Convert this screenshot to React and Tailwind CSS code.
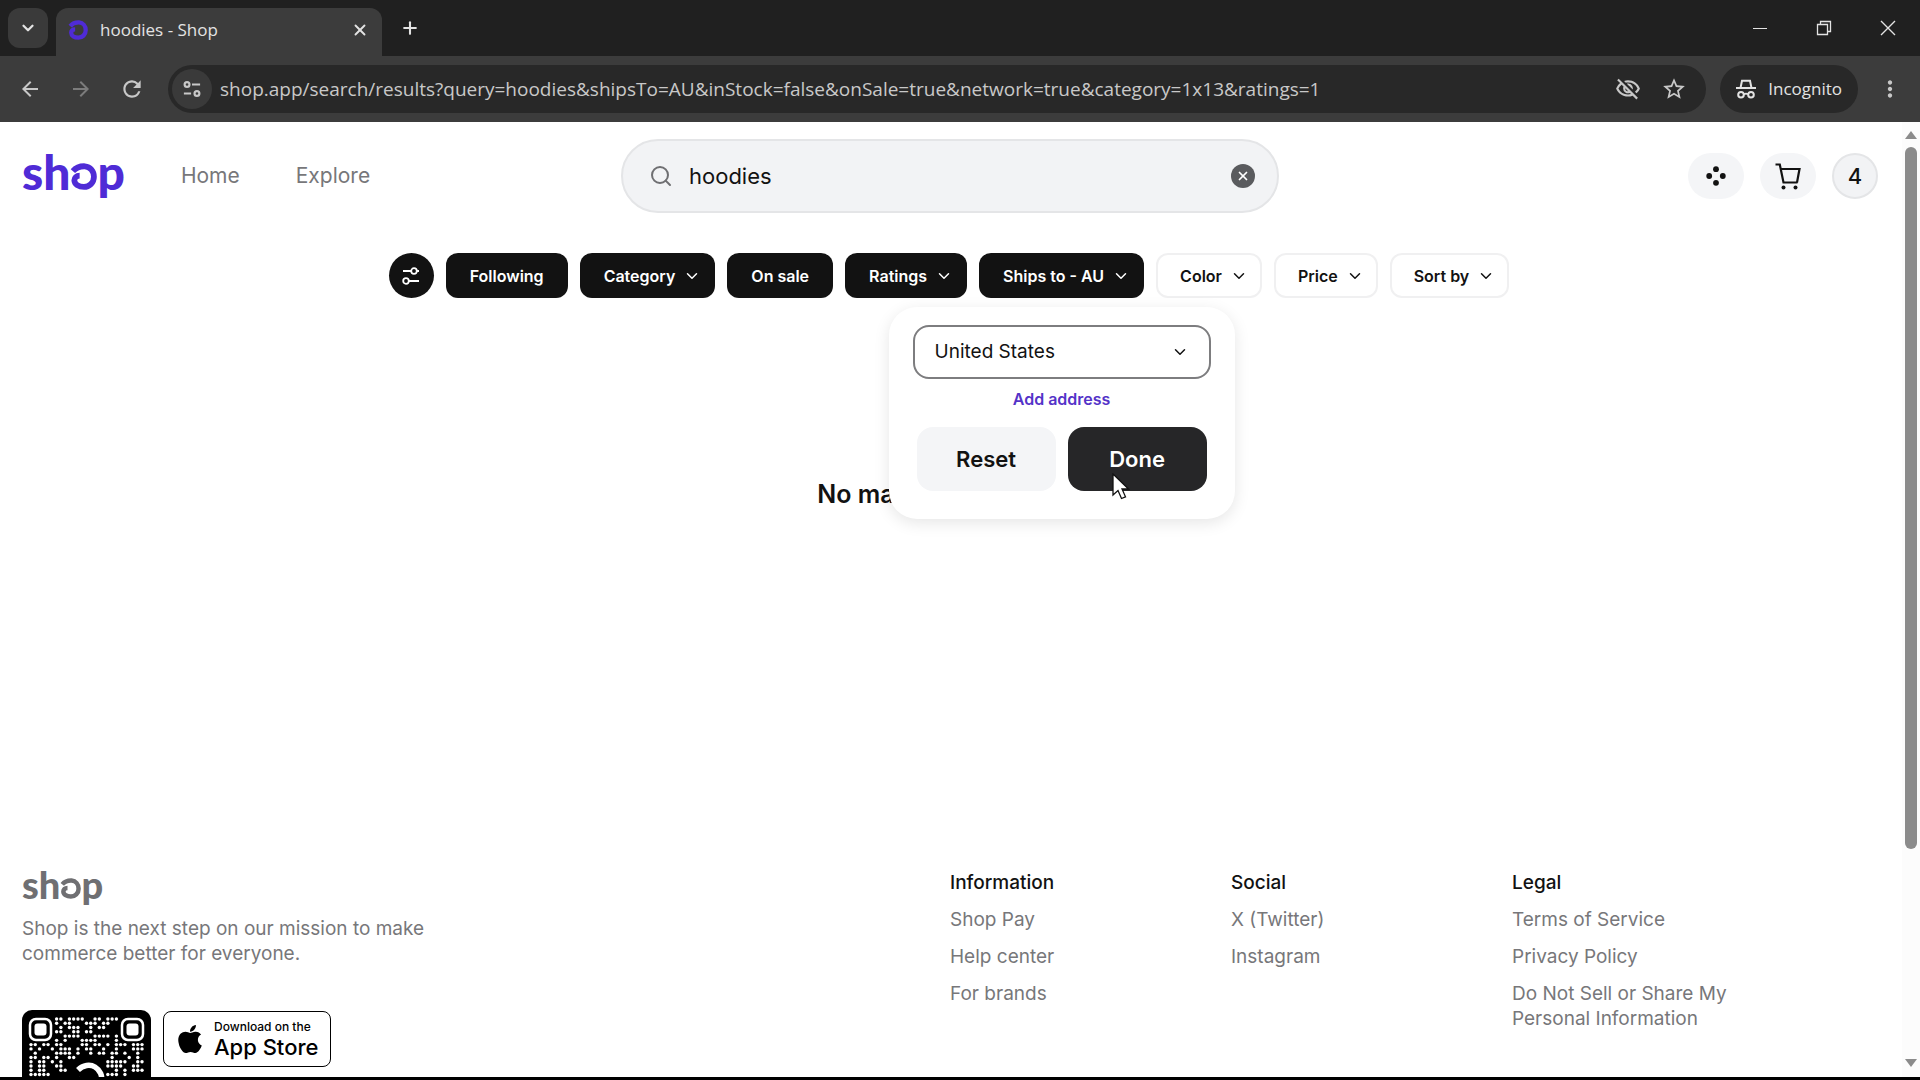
import { ChevronDown, X, Plus, Search } from "lucide-react";
import { FaApple } from "react-icons/fa";
import { MdArrowBack, MdArrowForward, MdMoreVert, MdOutlineVisibilityOff, MdRefresh, MdStarBorder } from "react-icons/md";

function Curl({ className, strokeWidth = 6 }) {
  return (
    <svg viewBox="0 0 28 28" className={className} fill="none" stroke="currentColor" strokeWidth={strokeWidth} aria-hidden="true">
      <path d="M3 8.500C6.500 4.500 11 3.200 15.500 3.400C21 3.800 24.800 8.500 24.800 14.200C24.800 20.500 20 24.800 14.500 24.800C9 24.800 4.500 22 4.500 18C4.500 15.200 6.500 13.200 10 13.200" />
    </svg>
  );
}

function Logo({ small = false }) {
  return (
    <a
      href="#home"
      aria-label="shop"
      className={
        small
          ? "flex h-7 items-center font-['Lato',sans-serif] text-[38px] leading-7 font-black text-[#6f6f72]"
          : "flex h-12 items-center pb-2 font-['Lato',sans-serif] text-5xl leading-12 font-black text-[#4f2bd6]"
      }
    >
      <span>sh</span>
      <Curl className={small ? "mt-2 size-[21px]" : "mt-2 size-[27px]"} />
      <span>p</span>
    </a>
  );
}

function TitleBar() {
  return (
    <div className="flex h-14 items-end bg-[#202020] text-[#e3e3e3]">
      <div className="flex h-14 items-center pr-2 pl-2">
        <button aria-label="Search tabs" className="grid size-10 place-items-center rounded-xl bg-[#3a3a3a]">
          <ChevronDown size={18} strokeWidth={3} />
        </button>
      </div>
      <div className="flex h-12 w-[326px] items-center rounded-t-xl bg-[#3c3c3c] pr-[10px] pl-3">
        <Curl className="mb-1 size-5 text-[#4f2bd6]" />
        <span className="mb-1 ml-3 flex-1 text-[17px]">hoodies - Shop</span>
        <button aria-label="Close tab" className="mb-1 grid size-6 place-items-center">
          <X size={18} strokeWidth={2.5} />
        </button>
      </div>
      <button aria-label="New tab" className="mb-3 ml-3 grid size-8 place-items-center">
        <Plus size={20} strokeWidth={2.5} />
      </button>
      <div className="mb-3 ml-auto flex gap-8 pr-4">
        <button aria-label="Minimize" className="grid size-8 place-items-center">
          <svg className="size-4" viewBox="0 0 16 16" stroke="currentColor"><path d="M1 8.500h14" /></svg>
        </button>
        <button aria-label="Restore" className="grid size-8 place-items-center">
          <svg className="size-4" viewBox="0 0 16 16" fill="none" stroke="currentColor" strokeWidth="1.300"><path d="M1.500 4.500h10v10h-10zM4.500 4.500v-3h10v10h-3" /></svg>
        </button>
        <button aria-label="Close window" className="grid size-8 place-items-center">
          <svg className="size-4" viewBox="0 0 16 16" stroke="currentColor" strokeWidth="1.400"><path d="M1 1l14 14M15 1L1 15" /></svg>
        </button>
      </div>
    </div>
  );
}

function Toolbar() {
  return (
    <div className="flex h-[66px] items-center bg-[#3c3c3c] pr-[14px] pl-[14px] text-[#c8c8c8]">
      <div className="flex gap-[19px]">
        <button aria-label="Back" className="grid size-8 place-items-center"><MdArrowBack size={24} /></button>
        <button aria-label="Forward" className="grid size-8 place-items-center text-[#7c7c7c]"><MdArrowForward size={24} /></button>
        <button aria-label="Reload" className="grid size-8 place-items-center"><MdRefresh size={26} /></button>
      </div>
      <div className="ml-5 flex h-12 flex-1 items-center rounded-full bg-[#282828] pr-4 pl-1">
        <button aria-label="View site information" className="grid size-10 place-items-center rounded-full bg-[#3a3a3a]">
          <svg className="size-[18px]" viewBox="0 0 20 20" fill="none" stroke="currentColor" strokeWidth="2.400"><circle cx="4.500" cy="5" r="2.700" /><path d="M10 5h9M1 15h8" /><circle cx="15.500" cy="15" r="2.700" /></svg>
        </button>
        <input
          aria-label="Address"
          className="ml-2 h-10 min-w-0 flex-1 bg-transparent text-[19px] text-[#c8c8c8] outline-none"
          defaultValue="shop.app/search/results?query=hoodies&shipsTo=AU&inStock=false&onSale=true&network=true&category=1x13&ratings=1"
        />
        <button aria-label="Third-party cookies blocked" className="grid size-8 place-items-center"><MdOutlineVisibilityOff size={26} /></button>
        <button aria-label="Bookmark this tab" className="ml-[14px] grid size-8 place-items-center"><MdStarBorder size={26} /></button>
      </div>
      <button className="ml-[14px] flex h-12 items-center gap-3 rounded-full bg-[#282828] px-4 text-[#e3e3e3]">
        <svg className="size-5" viewBox="0 0 20 20" fill="none" stroke="currentColor" strokeWidth="2" aria-hidden="true">
          <path d="M0 9h20M4.500 9L6 1.800h8L15.500 9M8 15.500c1-1 3-1 4 0" />
          <circle cx="5" cy="15.800" r="2.800" />
          <circle cx="15" cy="15.800" r="2.800" />
        </svg>
        <span className="text-[17px]">Incognito</span>
      </button>
      <button aria-label="Menu" className="ml-4 grid size-8 place-items-center"><MdMoreVert size={26} /></button>
    </div>
  );
}

function Header() {
  return (
    <header className="grid grid-cols-[1fr_658px_1fr] items-center pt-[17px] pr-6 pl-[22px]">
      <div className="flex items-center">
        <Logo />
        <nav className="ml-14 flex gap-14 text-[21px] text-[#77777a]">
          <a href="#home">Home</a>
          <a href="#explore">Explore</a>
        </nav>
      </div>
      <div className="flex h-[74px] items-center rounded-full border-2 border-[#e4e5e7] bg-[#f2f3f5] pr-[22px] pl-[26px]">
        <Search size={24} className="text-[#6f6f72]" />
        <input aria-label="Search" defaultValue="hoodies" className="ml-4 h-12 min-w-0 flex-1 bg-transparent text-[22px] text-[#121212] outline-none" />
        <button aria-label="Clear search" className="grid size-6 place-items-center rounded-full bg-[#5a5b5e] text-white">
          <X size={14} strokeWidth={3} />
        </button>
      </div>
      <div className="flex items-center justify-end gap-4 text-[#121212]">
        <button aria-label="Apps" className="grid h-[46px] w-14 place-items-center rounded-full bg-[#f4f5f7]">
          <svg className="size-5" viewBox="0 0 20 20" fill="currentColor"><circle cx="10" cy="3.200" r="2.900" /><circle cx="3.200" cy="10" r="2.900" /><circle cx="16.800" cy="10" r="2.900" /><circle cx="10" cy="16.800" r="2.900" /></svg>
        </button>
        <button aria-label="Cart" className="grid h-[46px] w-14 place-items-center rounded-full bg-[#f4f5f7]">
          <svg className="size-7" viewBox="0 0 28 28" fill="none" stroke="currentColor" strokeWidth="2.200"><path d="M1.500 2.500h4.300l3.700 18h14M6.800 7h18.700l-2.500 13.500" /><circle cx="9.500" cy="25.500" r="2" fill="currentColor" stroke="none" /><circle cx="21.500" cy="25.500" r="2" fill="currentColor" stroke="none" /></svg>
        </button>
        <button aria-label="Account" className="grid size-[46px] place-items-center rounded-full border-2 border-[#e4e5e7] bg-[#f2f3f5] text-[22px] font-medium">4</button>
      </div>
    </header>
  );
}

const filters = [
  { label: "Following", on: true },
  { label: "Category", on: true, menu: true },
  { label: "On sale", on: true },
  { label: "Ratings", on: true, menu: true },
  { label: "Ships to - AU", on: true, menu: true, open: true },
  { label: "Color", menu: true },
  { label: "Price", menu: true },
  { label: "Sort by", menu: true },
];

function Popover() {
  return (
    <div className="absolute top-[54px] left-1/2 z-10 w-[346px] -translate-x-1/2 rounded-[28px] bg-white px-6 pt-[18px] pb-7 text-[#121212] shadow-[0_4px_16px_rgba(0,0,0,0.1)]">
      <div className="grid items-center">
        <select aria-label="Ships to" className="col-start-1 row-start-1 h-[54px] w-full appearance-none rounded-2xl border-2 border-[#7d7d7f] bg-white px-5 text-[19px] outline-none">
          <option>United States</option>
        </select>
        <ChevronDown size={18} className="pointer-events-none col-start-1 row-start-1 mr-[22px] justify-self-end" />
      </div>
      <a href="#address" className="mt-2 block text-center text-base leading-6 font-semibold text-[#5433c8]">Add address</a>
      <div className="mt-4 grid grid-cols-2 gap-3 px-1">
        <button className="h-16 rounded-2xl bg-[#f4f5f7] text-[22px] font-semibold">Reset</button>
        <button className="h-16 rounded-2xl bg-[#262628] text-[22px] font-semibold text-white">Done</button>
      </div>
      <svg className="absolute top-[166px] left-[223px] h-7 w-[18px]" viewBox="0 0 18 28" aria-hidden="true">
        <path d="M1 1v21l5-4.500 3.500 8 4-1.700-3.500-7.800h6.500z" fill="#fff" stroke="#111" strokeWidth="1.300" />
      </svg>
    </div>
  );
}

function Filters() {
  return (
    <div className="mt-10 flex justify-center gap-3 pr-1">
      <button aria-label="All filters" className="grid size-[45px] place-items-center rounded-full bg-[#121212] text-white">
        <svg className="size-5" viewBox="0 0 20 20" fill="none" stroke="currentColor" strokeWidth="1.800"><path d="M2 5h8M8 15h10" /><circle cx="13" cy="5" r="2.800" /><circle cx="5" cy="15" r="2.800" /><path d="M16 5h2" /></svg>
      </button>
      {filters.map((f) => (
        <div key={f.label} className="relative">
          <button
            className={
              f.on
                ? "flex h-[45px] items-center gap-2 rounded-xl bg-[#121212] px-6 text-base font-semibold text-white"
                : "flex h-[45px] items-center gap-2 rounded-xl border-2 border-[#f0f0f1] bg-white px-[22px] text-base font-semibold text-[#121212]"
            }
          >
            {f.label}
            {f.menu && <ChevronDown size={18} className="-mr-[10px]" />}
          </button>
          {f.open && <Popover />}
        </div>
      ))}
    </div>
  );
}

const COLS = 27;
const qrDots = [];
for (let r = 0; r < 27; r += 1) {
  for (let c = 0; c < COLS; c += 1) {
    const corner = r < 6 && (c < 6 || c > COLS - 7);
    const center = Math.hypot(r - 13, c - 13) < 4.5;
    const seed = Math.imul(r * 73 + c * 179 + 11, 2654435761) >>> 0;
    const noise = (Math.imul(seed ^ (seed >>> 15), 2246822519) >>> 0) / 4294967296;
    if (!corner && !center && noise > 0.5) qrDots.push([c, r]);
  }
}

function QrCode() {
  return (
    <svg className="size-[129px] shrink-0" viewBox="0 0 129 129" role="img" aria-label="Download QR code">
      <rect width="129" height="129" rx="10" fill="#000" />
      {qrDots.map(([c, r]) => (
        <circle key={c + "-" + r} cx={9 + c * 4.27} cy={9 + r * 4.27} r="1.700" fill="#fff" />
      ))}
      {[8, 100].map((x) => (
        <g key={x}>
          <rect x={x} y="9" width="21" height="21" rx="6" fill="none" stroke="#fff" strokeWidth="2.500" />
          <rect x={x + 4.5} y="13.500" width="12" height="12" rx="3" fill="#fff" />
        </g>
      ))}
      <path d="M56 60c5-5 12-6 17-3s8 9 6 15-10 10-16 8-8-8-4-11" fill="none" stroke="#fff" strokeWidth="5.500" />
    </svg>
  );
}

const columns = [
  { title: "Information", links: ["Shop Pay", "Help center", "For brands"] },
  { title: "Social", links: ["X (Twitter)", "Instagram"] },
  { title: "Legal", links: ["Terms of Service", "Privacy Policy", "Do Not Sell or Share My Personal Information"] },
];

function Footer() {
  return (
    <footer className="mt-auto flex h-[207px] shrink-0 pr-6 pl-[22px] text-[19px] leading-[25px] text-[#77777a]">
      <div className="w-1/2">
        <Logo small />
        <p className="mt-[18px] max-w-[440px]">Shop is the next step on our mission to make commerce better for everyone.</p>
        <div className="mt-11 flex items-start gap-3">
          <QrCode />
          <a href="#app-store" className="mt-px flex h-14 items-center gap-2 rounded-lg border border-black bg-white pr-3 pl-[10px] text-black">
            <FaApple size={32} />
            <span className="flex flex-col">
              <span className="text-[12px] leading-4 font-medium">Download on the</span>
              <span className="text-[22px] leading-6 font-medium">App Store</span>
            </span>
          </a>
        </div>
      </div>
      <div className="grid w-1/2 grid-cols-3 pr-[85px]">
        {columns.map((col) => (
          <div key={col.title} className="pr-12">
            <h2 className="font-medium text-[#121212]">{col.title}</h2>
            <ul>
              {col.links.map((l) => (
                <li key={l} className="mt-3"><a href="#footer">{l}</a></li>
              ))}
            </ul>
          </div>
        ))}
      </div>
    </footer>
  );
}

function Scrollbar() {
  return (
    <div className="flex w-[18px] shrink-0 flex-col items-center bg-[#fcfcfc] pt-[9px] pr-px pb-[10px]" aria-hidden="true">
      <svg className="h-2 w-3 shrink-0" viewBox="0 0 12 8" fill="#8b8b8b"><path d="M6 0l6 8H0z" /></svg>
      <div className="mt-2 h-3/4 w-3 rounded-full bg-[#8b8b8b]" />
      <svg className="mt-auto h-2 w-3 shrink-0" viewBox="0 0 12 8" fill="#8b8b8b"><path d="M0 0h12L6 8z" /></svg>
    </div>
  );
}

export default function App() {
  return (
    <div className="flex h-screen flex-col overflow-hidden border-b-3 border-black bg-white font-['Inter',sans-serif]">
      <div className="shrink-0 font-['Open_Sans',sans-serif]">
        <TitleBar />
        <Toolbar />
      </div>
      <div className="flex min-h-0 flex-1">
        <main className="flex min-w-0 flex-1 flex-col overflow-hidden">
          <Header />
          <Filters />
          <h1 className="mt-[180px] text-center text-[25px] leading-8 font-semibold text-[#121212]">No matching products</h1>
          <Footer />
        </main>
        <Scrollbar />
      </div>
    </div>
  );
}
